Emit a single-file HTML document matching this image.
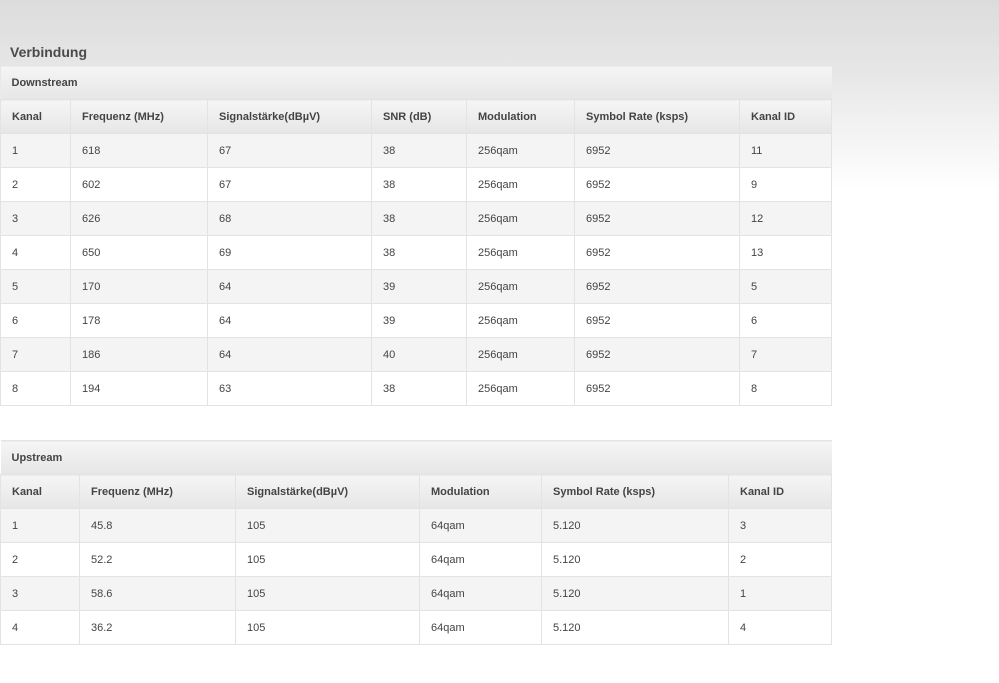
<!DOCTYPE html>
<html><head><meta charset="utf-8"><style>
body{margin:0;width:999px;height:683px;overflow:hidden;font-family:"Liberation Sans",Arial,sans-serif;background:linear-gradient(#dcdcdc 0px,#e8e8e8 80px,#fff 190px,#fff);color:#444}
h1{position:absolute;left:10px;top:44px;margin:0;font-size:14px;font-weight:bold;color:#4a4a4a}
table{position:absolute;left:0;width:832px;border-collapse:collapse;font-size:11px;table-layout:fixed}
td,th{height:33px;padding:0 0 0 11px;text-align:left;border:1px solid #e3e3e3;color:#444}
th{font-weight:bold;background:linear-gradient(#f5f5f5,#e6e6e6)}
th.cap{border-left:none;border-right:none}
tr.o td{background:#f4f4f4}
tr.e td{background:#fff}
</style></head><body>
<h1>Verbindung</h1>
<table style="top:65px">
<colgroup><col style="width:70px"><col style="width:137px"><col style="width:164px"><col style="width:95px"><col style="width:108px"><col style="width:165px"><col style="width:92px"></colgroup>
<tr><th class="cap" colspan="7">Downstream</th></tr>
<tr><th>Kanal</th><th>Frequenz (MHz)</th><th>Signalstärke(dBµV)</th><th>SNR (dB)</th><th>Modulation</th><th>Symbol Rate (ksps)</th><th>Kanal ID</th></tr>
<tr class="o"><td>1</td><td>618</td><td>67</td><td>38</td><td>256qam</td><td>6952</td><td>11</td></tr>
<tr class="e"><td>2</td><td>602</td><td>67</td><td>38</td><td>256qam</td><td>6952</td><td>9</td></tr>
<tr class="o"><td>3</td><td>626</td><td>68</td><td>38</td><td>256qam</td><td>6952</td><td>12</td></tr>
<tr class="e"><td>4</td><td>650</td><td>69</td><td>38</td><td>256qam</td><td>6952</td><td>13</td></tr>
<tr class="o"><td>5</td><td>170</td><td>64</td><td>39</td><td>256qam</td><td>6952</td><td>5</td></tr>
<tr class="e"><td>6</td><td>178</td><td>64</td><td>39</td><td>256qam</td><td>6952</td><td>6</td></tr>
<tr class="o"><td>7</td><td>186</td><td>64</td><td>40</td><td>256qam</td><td>6952</td><td>7</td></tr>
<tr class="e"><td>8</td><td>194</td><td>63</td><td>38</td><td>256qam</td><td>6952</td><td>8</td></tr>
</table>
<table style="top:440px">
<colgroup><col style="width:79px"><col style="width:156px"><col style="width:184px"><col style="width:122px"><col style="width:187px"><col style="width:103px"></colgroup>
<tr><th class="cap" colspan="6">Upstream</th></tr>
<tr><th>Kanal</th><th>Frequenz (MHz)</th><th>Signalstärke(dBµV)</th><th>Modulation</th><th>Symbol Rate (ksps)</th><th>Kanal ID</th></tr>
<tr class="o"><td>1</td><td>45.8</td><td>105</td><td>64qam</td><td>5.120</td><td>3</td></tr>
<tr class="e"><td>2</td><td>52.2</td><td>105</td><td>64qam</td><td>5.120</td><td>2</td></tr>
<tr class="o"><td>3</td><td>58.6</td><td>105</td><td>64qam</td><td>5.120</td><td>1</td></tr>
<tr class="e"><td>4</td><td>36.2</td><td>105</td><td>64qam</td><td>5.120</td><td>4</td></tr>
</table>
</body></html>
